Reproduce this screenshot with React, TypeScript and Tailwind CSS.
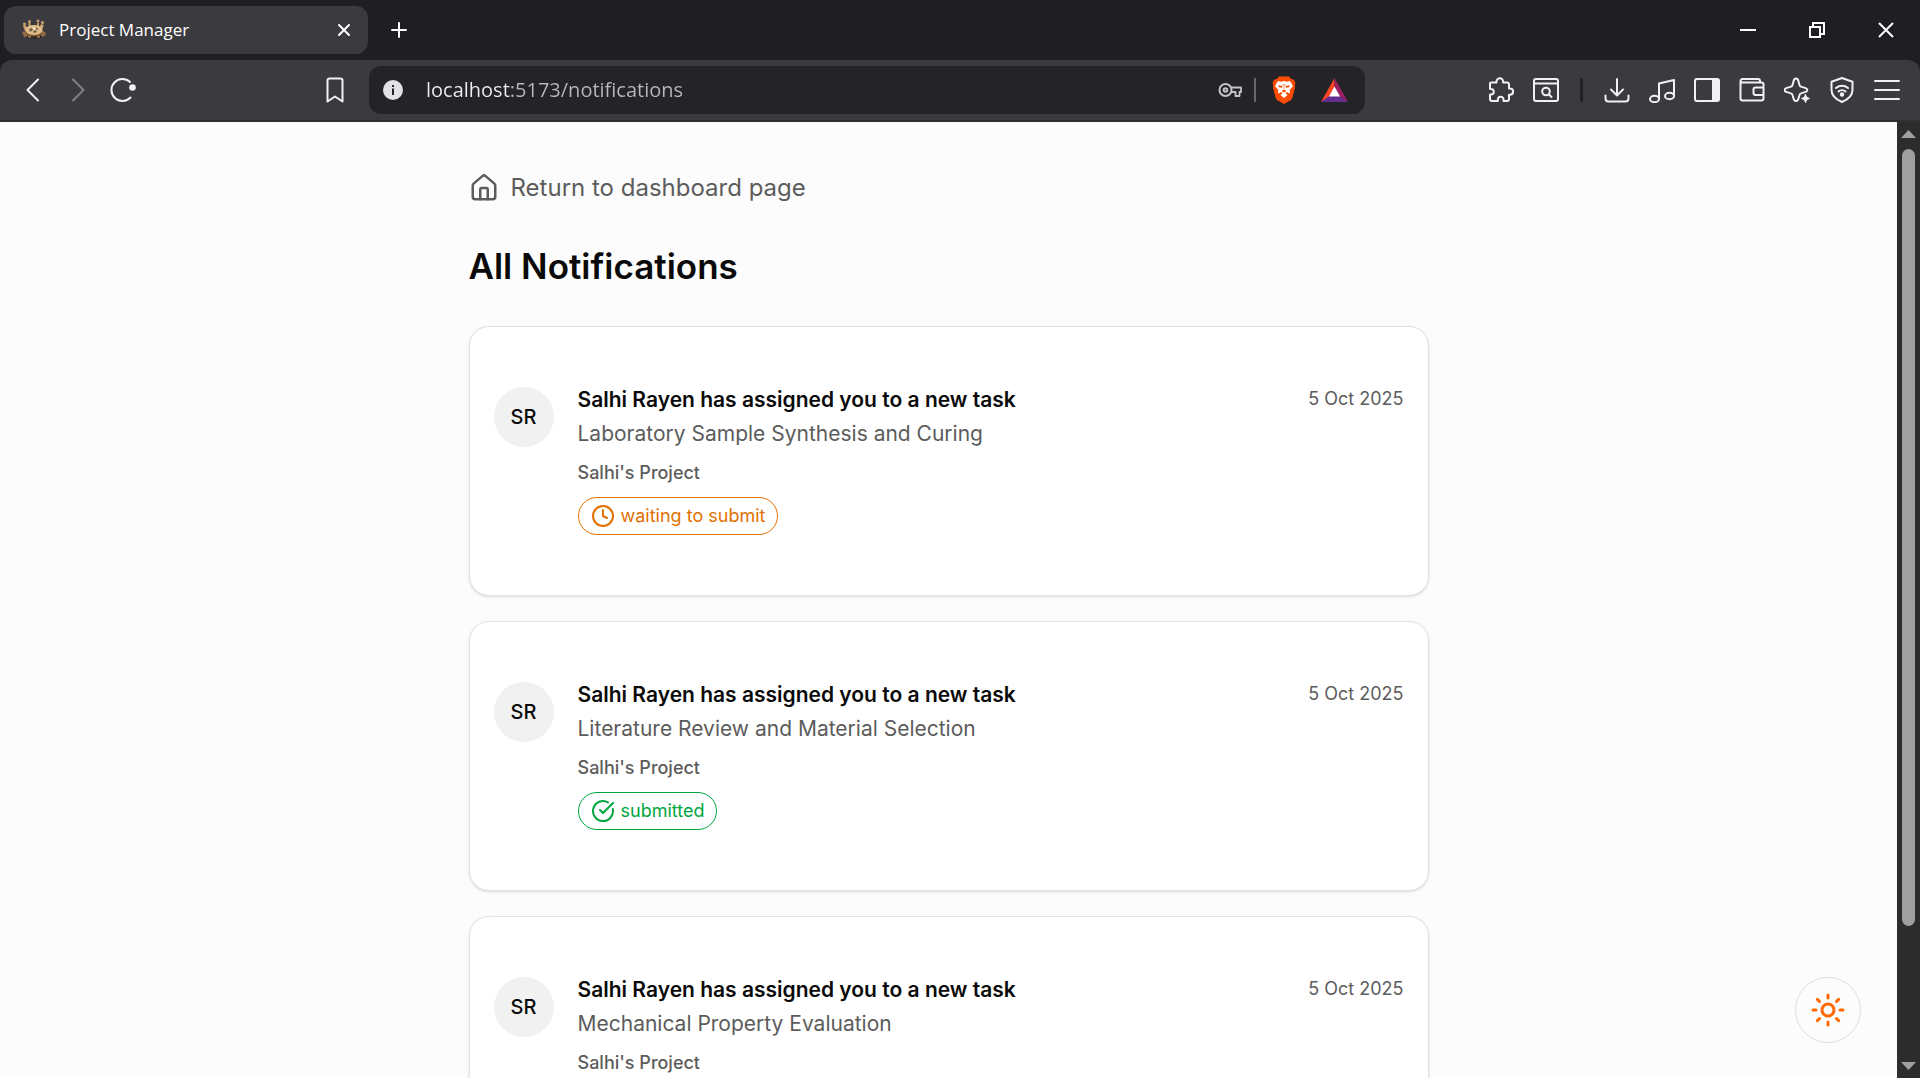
import React from "react";
import { CircleCheckBig, Clock, House, Sun } from "lucide-react";

type Status = "waiting to submit" | "submitted";

const notifications: { id: number; task: string; status: Status }[] = [
  { id: 1, task: "Laboratory Sample Synthesis and Curing", status: "waiting to submit" },
  { id: 2, task: "Literature Review and Material Selection", status: "submitted" },
  { id: 3, task: "Mechanical Property Evaluation", status: "submitted" },
];

function Glyph({ size = 26, width = 2, children }: { size?: number; width?: number; children: React.ReactNode }) {
  return (
    <svg width={size} height={size} viewBox={`0 0 ${size} ${size}`} fill="none" stroke="currentColor" strokeWidth={width} strokeLinecap="round" strokeLinejoin="round" aria-hidden="true">
      {children}
    </svg>
  );
}

function BarButton({ label, dim, children }: { label: string; dim?: boolean; children: React.ReactNode }) {
  return (
    <button type="button" aria-label={label} disabled={dim} className={`flex h-12 w-[45px] shrink-0 items-center justify-center ${dim ? "text-[#828186]" : "text-[#f1f0f4]"}`}>
      {children}
    </button>
  );
}

function Favicon() {
  return (
    <svg width="24" height="24" viewBox="0 0 24 24" aria-hidden="true" className="shrink-0">
      <path d="M3 17l3 4h11l5-3z" fill="#2c2a2b" />
      <g fill="#c9a06c">
        <circle cx="2.500" cy="6" r="1.600" /><circle cx="7.500" cy="3.500" r="1.500" /><circle cx="16" cy="3" r="1.500" /><circle cx="20.500" cy="4.500" r="1.600" />
        <path d="M1 8l2-1 4 4-4 2zM6.500 5h2v4h-2zM15 5h2v4h-2zM19 6l3 1-2 5-3-2z" />
        <path d="M0 14l4-1 2 4-2 2-2 0zM20 12l4 3-1 3-3 1-2-4zM6 17h3v3H6zM15 17h3v3h-3z" fill="#8d6b43" />
      </g>
      <ellipse cx="12" cy="13.500" rx="8.500" ry="5" fill="#7d5c37" />
      <ellipse cx="12" cy="12" rx="8.500" ry="5" fill="#e2bd85" />
      <path d="M7 11l3-1 1 2-3 2zM13 9l4 2-2 1zM11 13l3-1 1 2-3 1z" fill="#6d6250" />
      <path d="M10 10l3-1 0 3z" fill="#f6ead2" />
    </svg>
  );
}

function ShieldsLogo() {
  return (
    <svg width="24" height="28" viewBox="0 0 24 28" aria-hidden="true">
      <path d="M7 .5h10l2.500 2.800 2.300.2L23.500 7l-.8 2.500.5 1.500-2.700 10.500c-.3 1.200-1 2-2 2.700L12 28l-6.500-3.800c-1-.7-1.700-1.500-2-2.700L.8 11l.5-1.500L.5 7l1.700-3.500 2.300-.2z" fill="#fb4c06" />
      <path d="M6 5l3 .7 3-.7 3 .7L18 5l3 5-3.500 4.300c.9 1.500.8 2.500-.3 3.200L15 16l-1.500 1.200 2 1.800-3.500 3-3.500-3 2-1.800L9 16l-2.200 1.500c-1.100-.7-1.200-1.700-.3-3.200L3 10z" fill="#fff" />
      <path d="M6 9.200l4.500.9-.5 1.700-3-.6zM18 9.200l-4.500.9.5 1.700 3-.6zM10.700 8l1.300.8 1.300-.8L12.700 14l1.800 1L12 16.500 9.500 15l1.800-1z" fill="#fb4c06" />
      <path d="M11.300 9h1.400v5h-1.400z" fill="#fff" />
    </svg>
  );
}

function TabStrip() {
  return (
    <div className="flex h-[60px] shrink-0 items-center bg-[#1f1e23] pl-1 text-white">
      <div role="tab" aria-selected="true" className="flex h-12 w-[364px] items-center rounded-xl bg-[#3b3a3e] pl-[18px] pr-4">
        <Favicon />
        <span className="ml-[13px] flex-1 text-[17px] leading-6">Project Manager</span>
        <button type="button" aria-label="Close tab" className="flex size-4 items-center justify-center">
          <Glyph size={14} width={2}><path d="M2 2l10 10M12 2L2 12" /></Glyph>
        </button>
      </div>
      <button type="button" aria-label="New tab" className="ml-[19px] flex size-6 items-center justify-center">
        <Glyph size={24} width={2}><path d="M12 5v14M5 12h14" /></Glyph>
      </button>
      <div className="ml-auto flex">
        <button type="button" aria-label="Minimize" className="flex h-[58px] w-[69px] items-center justify-center">
          <svg width="16" height="16" fill="none" stroke="white" strokeWidth="2"><path d="M0 8h16" /></svg>
        </button>
        <button type="button" aria-label="Restore" className="flex h-[58px] w-[69px] items-center justify-center">
          <svg width="16" height="16" fill="none" stroke="white" strokeWidth="2"><path d="M1 5h10v10H1zM4 4V1h11v11h-3" /></svg>
        </button>
        <button type="button" aria-label="Close" className="flex h-[58px] w-[69px] items-center justify-center">
          <svg width="16" height="16" fill="none" stroke="white" strokeWidth="2"><path d="M1 1l14 14M15 1L1 15" /></svg>
        </button>
      </div>
    </div>
  );
}

function Toolbar() {
  return (
    <div className="shrink-0 bg-[#1f1e23]">
      <div className="flex h-[62px] items-center rounded-t-xl border-b-2 border-[#302f33] bg-[#3b3a3e] pl-[10px] pr-[11px]">
        <BarButton label="Back"><Glyph><path d="M18 2.500L7.500 13 18 23.500" /></Glyph></BarButton>
        <BarButton label="Forward" dim><Glyph><path d="M8 2.500L18.500 13 8 23.500" /></Glyph></BarButton>
        <BarButton label="Reload">
          <Glyph><path d="M20.500 20.500A11 11 0 1 1 20 5" /><circle cx="22.500" cy="10.500" r="3.300" fill="currentColor" stroke="none" /></Glyph>
        </BarButton>
        <div className="ml-[167px] mr-3 flex">
          <BarButton label="Bookmark this tab"><Glyph><path d="M7.500 1.500h11a2 2 0 0 1 2 2V24.500l-7.500-5-7.500 5V3.500a2 2 0 0 1 2-2z" /></Glyph></BarButton>
        </div>
        <div className="flex h-12 min-w-0 flex-1 items-center rounded-xl bg-[#242328] pl-[14px] pr-[17px]">
          <svg width="20" height="20" viewBox="0 0 20 20" aria-hidden="true" className="shrink-0">
            <circle cx="10" cy="10" r="10" fill="#e2e1e6" />
            <path d="M9 5h2v2H9zM9 8.500h2V15H9z" fill="#242328" />
          </svg>
          <input
            aria-label="Address"
            readOnly
            value="localhost:5173/notifications"
            className="ml-[23px] min-w-0 flex-1 bg-[linear-gradient(90deg,#f0eff3_85px,#b9b8bd_85px)] bg-clip-text text-[20px] leading-8 text-transparent outline-none"
          />
          <button type="button" aria-label="Manage passwords" className="text-[#c4c3c8]">
            <Glyph size={24}><circle cx="7.500" cy="12" r="6" /><circle cx="7.500" cy="12" r="1.800" /><path d="M13 9.500h10v4.500h-1.500v4h-4v-4H13" strokeWidth="1.800" /></Glyph>
          </button>
          <span className="ml-3 h-6 w-[2px] bg-[#67666b]" />
          <button type="button" aria-label="Shields" className="ml-4"><ShieldsLogo /></button>
          <button type="button" aria-label="Rewards" className="ml-[25px]">
            <svg width="27" height="24" viewBox="0 0 27 24" aria-hidden="true">
              <path d="M13.500 0L0 24l9-6 4.500-9z" fill="#ff4724" />
              <path d="M13.500 0L27 24l-9-6-4.500-9z" fill="#9e1f63" />
              <path d="M0 24h27l-8.500-6h-10z" fill="#662d91" />
              <path d="M13.500 8.500l5.500 10H8z" fill="white" />
            </svg>
          </button>
        </div>
        <div className="ml-[113px] flex items-center">
          <BarButton label="Extensions">
            <Glyph><path d="M3 5.500h5.500v-1a3.300 3.300 0 0 1 6.600 0v1H19a2 2 0 0 1 2 2v4h1a3 3 0 0 1 0 6.200h-1V22a2 2 0 0 1-2 2h-3.500v-1.500a2.800 2.800 0 0 0-5.600 0V24H4a2 2 0 0 1-2-2v-4.500h1a2.800 2.800 0 0 0 0-5.600H2V6.500a1 1 0 0 1 1-1z" /></Glyph>
          </BarButton>
          <BarButton label="Search tabs">
            <Glyph><rect x="1" y="2" width="24" height="22" rx="2" /><path d="M1 6.500h24" /><circle cx="13" cy="14.500" r="3.800" /><path d="M16 17.500l2.500 2.500" /></Glyph>
          </BarButton>
          <span className="flex w-[26px] justify-center"><span className="h-6 w-[3px] rounded-full bg-[#212025]" /></span>
          <BarButton label="Downloads"><Glyph><path d="M13 2v16M7 12.500l6 6 6-6M1.500 18.500v3a3 3 0 0 0 3 3h17a3 3 0 0 0 3-3v-3" /></Glyph></BarButton>
          <BarButton label="Playlist">
            <Glyph><ellipse cx="5.500" cy="22" rx="4.500" ry="3.200" /><ellipse cx="20.500" cy="19" rx="4.500" ry="3.200" /><path d="M10 22V6.500L25 3v16" /></Glyph>
          </BarButton>
          <BarButton label="Side panel"><Glyph><rect x="1" y="2" width="24" height="22" rx="2" /><path d="M19 3h5v20h-5z" fill="currentColor" /></Glyph></BarButton>
          <BarButton label="Wallet">
            <Glyph><path d="M1.500 4v17.500a2 2 0 0 0 2 2h19a2 2 0 0 0 2-2V7.500a2 2 0 0 0-2-2h-19A2 2 0 0 1 1.500 4a2 2 0 0 1 2-2H19a2 2 0 0 1 2 2v1.500M24.500 10.500H16.500a2 2 0 0 0-2 2v3.500a2 2 0 0 0 2 2h8" /></Glyph>
          </BarButton>
          <BarButton label="Leo AI">
            <Glyph><path d="M12 1.500c1.200 0 2 .8 2.400 2.400l1 3.800a3 3 0 0 0 2.200 2.200l3.500 1c3 .8 3 3.400 0 4.200l-3.500 1a3 3 0 0 0-2.200 2.200l-1 3.500c-.8 3-4 3-4.800 0l-1-3.500a3 3 0 0 0-2.200-2.200l-3.500-1c-3-.8-3-3.400 0-4.200l3.500-1a3 3 0 0 0 2.200-2.200l1-3.800c.4-1.600 1.200-2.400 2.400-2.400z" /><path d="M21.500 17.500l1.200 2.800 2.800 1.200-2.800 1.200-1.200 2.800-1.200-2.800-2.800-1.200 2.800-1.200z" fill="currentColor" strokeWidth="1" /></Glyph>
          </BarButton>
          <BarButton label="VPN">
            <Glyph><path d="M13 1l10.500 3.800V13c0 6-4.500 9.500-10.500 12C7 22.500 2.500 19 2.500 13V4.800z" /><path d="M7 11c3.500-3 8.500-3 12 0M9.500 14.500c2-1.800 5-1.800 7 0" /><circle cx="13" cy="17.500" r="1.200" fill="currentColor" /></Glyph>
          </BarButton>
          <BarButton label="Menu"><Glyph><path d="M1 4h24M1 13h24M1 22h24" /></Glyph></BarButton>
        </div>
      </div>
    </div>
  );
}

function StatusBadge({ status }: { status: Status }) {
  const done = status === "submitted";
  const Icon = done ? CircleCheckBig : Clock;
  return (
    <span className={`mt-3 inline-flex items-center gap-[6px] self-start rounded-full border px-3 py-[6px] text-[18px] leading-6 ${done ? "border-[#00a63e] text-[#00a63e]" : "border-[#e17100] text-[#e17100]"}`}>
      <Icon size={24} />
      {status}
    </span>
  );
}

function NotificationCard({ task, status }: { task: string; status: Status }) {
  return (
    <li className="flex items-start gap-6 rounded-[20px] border border-[#e2e2e2] bg-white px-6 py-[60px] shadow-sm">
      <div className="flex size-[60px] shrink-0 items-center justify-center rounded-full bg-[#f1f1f1] text-[20px] font-medium">SR</div>
      <div className="flex flex-1 flex-col">
        <h2 className="text-[21px] font-semibold leading-[26px]">Salhi Rayen has assigned you to a new task</h2>
        <p className="mt-[6px] text-[21px] leading-[30px] text-[#5c5c5c]">{task}</p>
        <p className="mt-3 text-[18px] font-medium leading-6 text-[#5c5c5c]">Salhi's Project</p>
        <StatusBadge status={status} />
      </div>
      <time dateTime="2025-10-05" className="text-[18px] leading-6 text-[#5c5c5c]">5 Oct 2025</time>
    </li>
  );
}

function Scrollbar() {
  return (
    <div aria-hidden="true" className="flex w-[23px] shrink-0 flex-col items-center bg-[#2c2c2c] py-2 text-[#9f9f9f]">
      <svg width="15" height="8"><path d="M7.500 0L15 8H0z" fill="currentColor" /></svg>
      <div className="mt-[11px] mb-[136px] w-[13px] flex-1 rounded-full bg-current" />
      <svg width="15" height="8"><path d="M0 0h15L7.500 8z" fill="currentColor" /></svg>
    </div>
  );
}

export default function App() {
  return (
    <div className="flex h-screen flex-col overflow-hidden font-['Open_Sans','Noto_Sans',sans-serif]">
      <TabStrip />
      <Toolbar />
      <div className="flex min-h-0 flex-1">
        <main className="relative min-w-0 flex-1 overflow-hidden bg-[#fcfcfc] font-[Inter,sans-serif] text-[#0a0a0a]">
          <div className="mx-auto max-w-[960px] pt-[50px]">
            <a href="#dashboard" className="inline-flex items-center gap-3 text-[24px] leading-8 text-[#5c5c5c]">
              <House size={30} />
              Return to dashboard page
            </a>
            <h1 className="mt-[33px] text-[35px] font-semibold leading-[48px]">All Notifications</h1>
            <ul className="mt-9 flex flex-col gap-[25px]">
              {notifications.map((n) => (
                <NotificationCard key={n.id} task={n.task} status={n.status} />
              ))}
            </ul>
          </div>
          <button type="button" aria-label="Toggle theme" className="absolute bottom-[35px] right-9 flex size-[66px] items-center justify-center rounded-full border border-[#dedede] bg-[#fcfcfc] text-[#ff6900]">
            <Sun size={36} />
          </button>
        </main>
        <Scrollbar />
      </div>
    </div>
  );
}
